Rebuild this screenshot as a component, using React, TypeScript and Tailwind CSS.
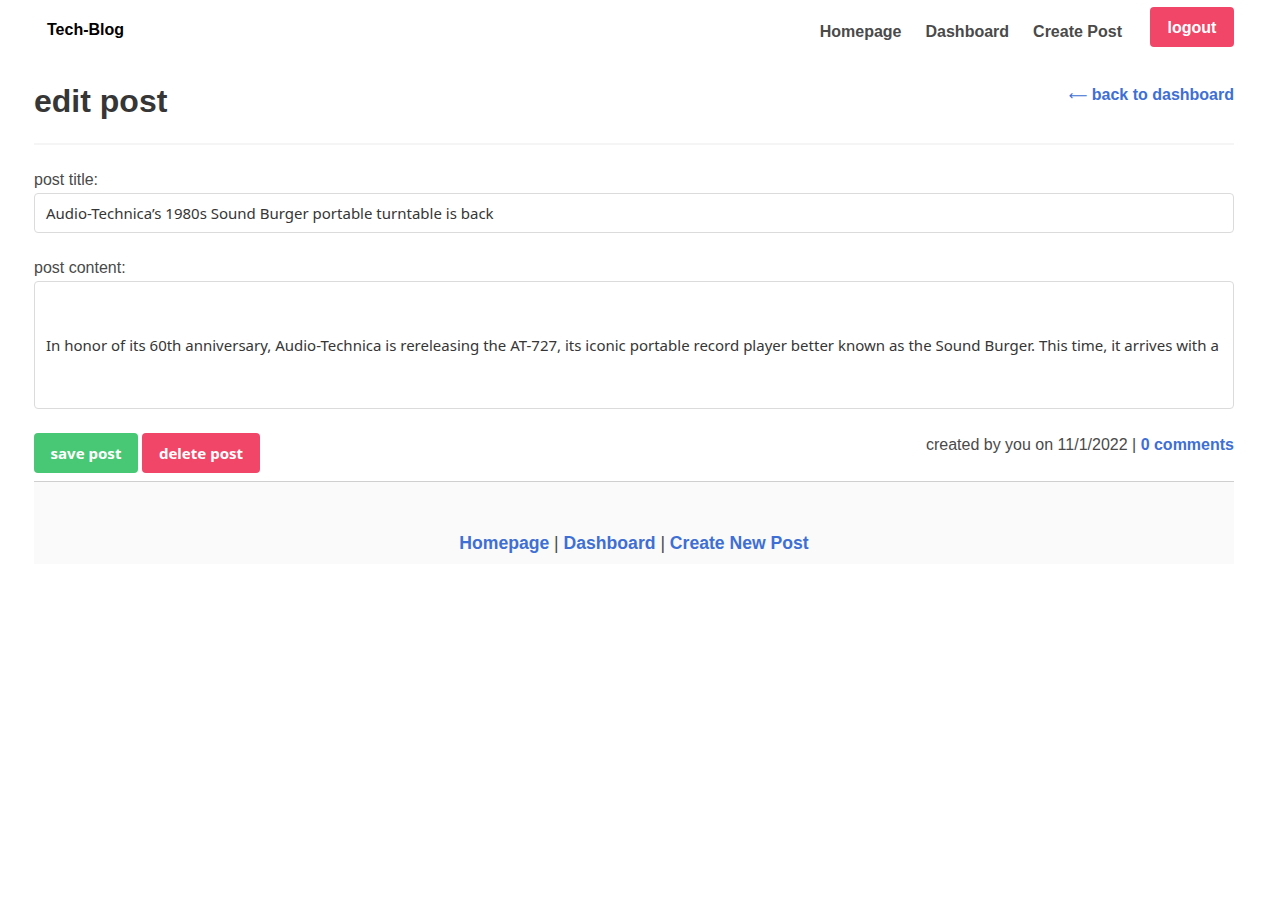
export default function App() {
  const arial = { fontFamily: '"Liberation Sans", Arial, sans-serif' }
  const ui = '[font-family:"Noto_Sans","Open_Sans",sans-serif]'

  return (
    <div className="min-h-[922px] bg-white text-[#4a4a4a] [font-family:'Liberation_Sans',Arial,sans-serif]" style={arial}>
      {/* Navbar */}
      <nav className="flex h-[54px] items-start justify-between px-[34px]">
        <a className="mt-[18px] ml-[13px] text-[16px] font-bold text-black">Tech-Blog</a>
        <div className="flex items-start">
          <a className="mt-[20px] text-[16px] font-bold text-[#4a4a4a]">Homepage</a>
          <a className="mt-[20px] ml-[24px] text-[16px] font-bold text-[#4a4a4a]">Dashboard</a>
          <a className="mt-[20px] ml-[24px] text-[16px] font-bold text-[#4a4a4a]">Create Post</a>
          <button className="mt-[7px] ml-[28px] h-[40px] w-[84px] rounded-[4px] bg-[#f14668] pt-[2px] text-[16px] font-bold text-white">
            logout
          </button>
        </div>
      </nav>

      <main className="mx-[34px]">
        {/* Heading */}
        <div className="flex items-start justify-between border-b-2 border-[#f5f5f5] pb-[22px]">
          <h1 className="mt-[27px] text-[32px] leading-[40px] font-bold text-[#363636]">edit post</h1>
          <a className="mt-[29px] text-[16px] font-bold text-[#3e6fd4]">
            <span className="text-[13px] font-normal [font-family:'DejaVu_Sans',sans-serif]">⟵</span> back to dashboard
          </a>
        </div>

        {/* Form */}
        <form className="mt-[25px]">
          <label className="block text-[16px] leading-[20px] text-[#4a4a4a]">post title:</label>
          <div className={`mt-[3px] flex h-[40px] items-center rounded-[4px] border border-[#dbdbdb] px-[11px] text-[15px] text-[#363636] ${ui}`}>
            Audio-Technica’s 1980s Sound Burger portable turntable is back
          </div>

          <label className="mt-[25px] block text-[16px] leading-[20px] text-[#4a4a4a]">post content:</label>
          <div className={`mt-[3px] flex h-[128px] items-center overflow-hidden whitespace-nowrap rounded-[4px] border border-[#dbdbdb] px-[11px] text-[15px] text-[#363636] ${ui}`}>
            In honor of its 60th anniversary, Audio-Technica is rereleasing the AT-727, its iconic portable record player better known as the Sound Burger. This time, it arrives with a
          </div>

          <div className="mt-[24px] flex items-start justify-between border-b border-[#cfcfcf] pb-[8px]">
            <div className="flex gap-[4px]">
              <button type="button" className={`h-[40px] w-[104px] rounded-[4px] bg-[#48c774] text-[15px] font-bold text-white ${ui}`}>
                save post
              </button>
              <button type="button" className={`h-[40px] w-[118px] rounded-[4px] bg-[#f14668] text-[15px] font-bold text-white ${ui}`}>
                delete post
              </button>
            </div>
            <p className="text-[16px] text-[#4a4a4a]">
              created by you on 11/1/2022 | <a className="font-bold text-[#3e6fd4]">0 comments</a>
            </p>
          </div>
        </form>

        {/* Footer */}
        <footer className="flex h-[82px] items-end justify-center bg-[#fafafa] pb-[8px] text-[17.6px] text-[#4a4a4a]">
          <p>
            <a className="font-bold text-[#3e6fd4]">Homepage</a> | <a className="font-bold text-[#3e6fd4]">Dashboard</a> | <a className="font-bold text-[#3e6fd4]">Create New Post</a>
          </p>
        </footer>
      </main>
    </div>
  )
}
